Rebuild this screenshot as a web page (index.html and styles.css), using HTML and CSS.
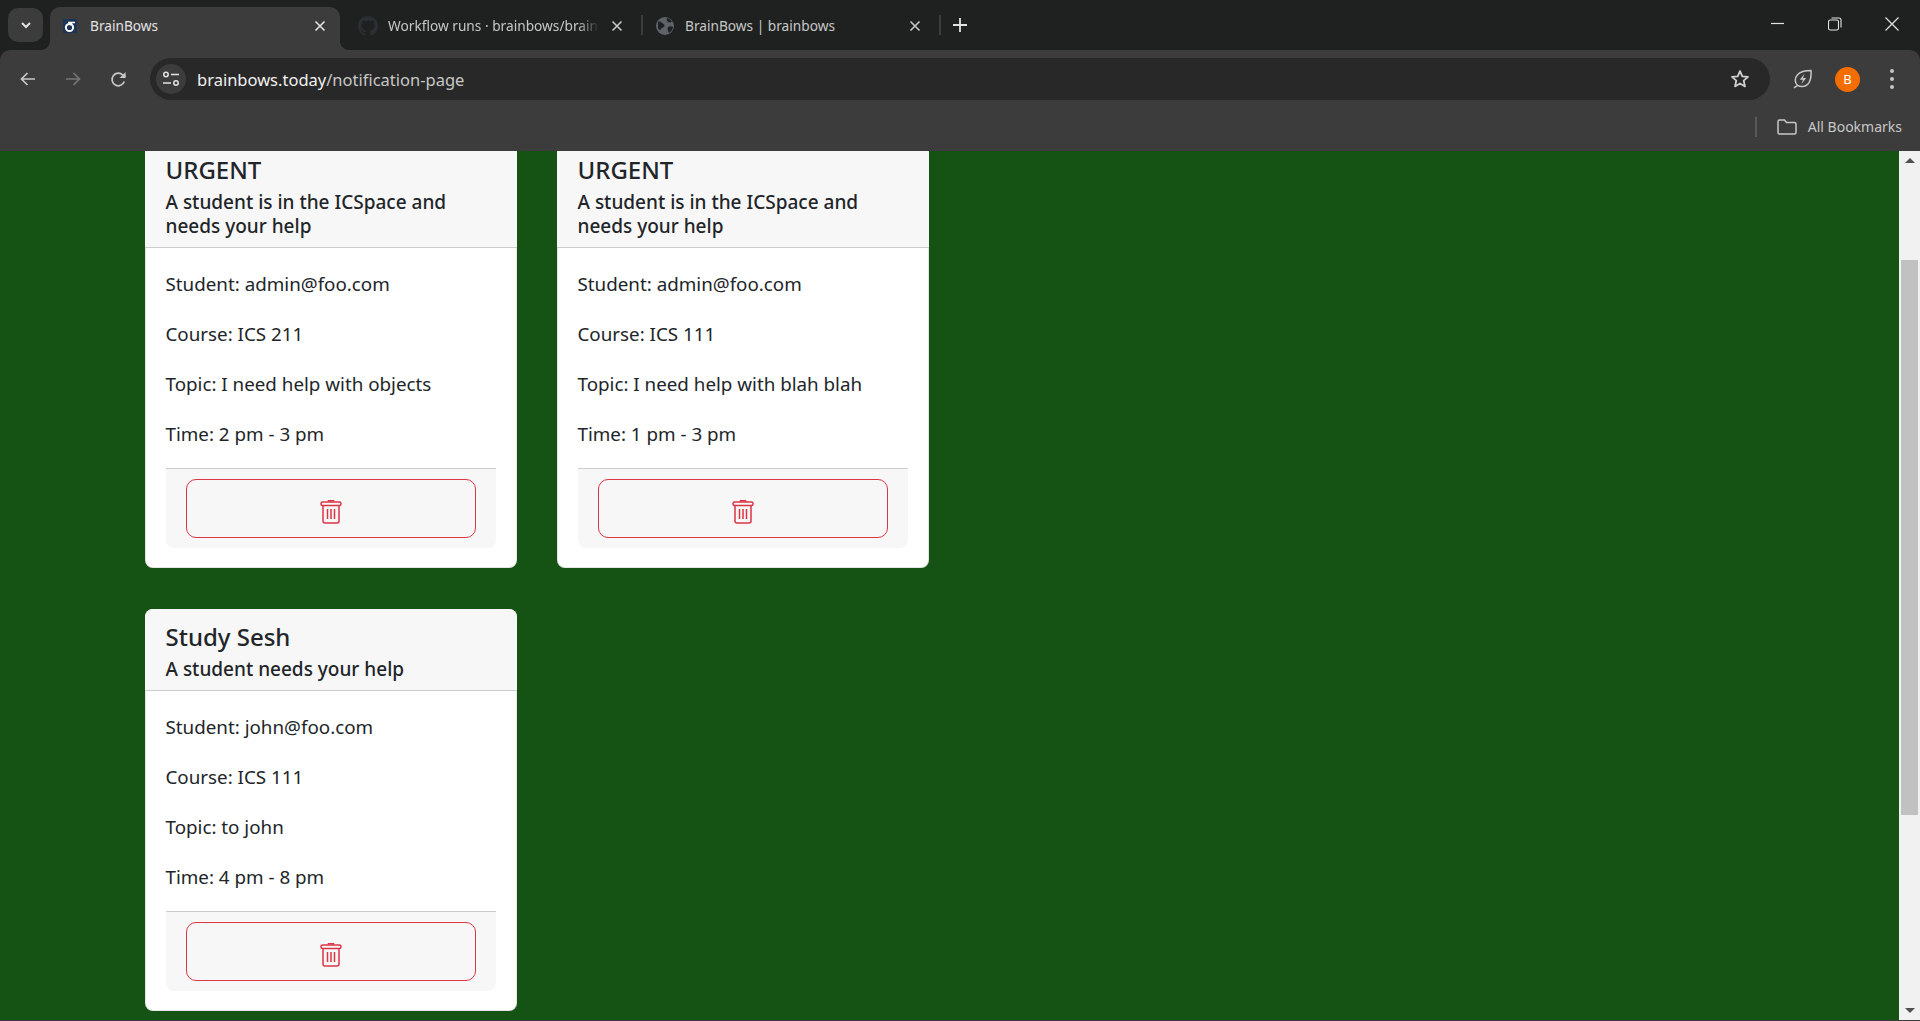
FILE: index.html
```html
<!DOCTYPE html>
<html>
<head>
    <title>BrainBows</title>
    <link rel="stylesheet" href="styles.css">
</head>
<body>
    <div id="browser">
        <div class="tabstrip">
            <div class="tab-search">
                <svg width="14" height="14" viewBox="0 0 14 14"><path d="M3 5l4 4 4-4" fill="none" stroke="#e3e3e3" stroke-width="2"/></svg>
            </div>
            <div class="tab tab-active">
                <svg class="favicon" width="14" height="14" viewBox="0 0 14 14"><rect width="14" height="14" fill="#1d3557"/><circle cx="6.5" cy="8.5" r="3.6" fill="none" stroke="#fff" stroke-width="2"/><path d="M5 3.5h7M9 3.5L7 6" fill="none" stroke="#fff" stroke-width="1.6"/></svg>
                <span class="tab-title">BrainBows</span>
                <svg class="tab-x" width="12" height="12" viewBox="0 0 12 12"><path d="M1.5 1.5l9 9M10.5 1.5l-9 9" stroke="#e3e3e3" stroke-width="1.6"/></svg>
            </div>
            <div class="tab tab-github">
                <svg class="favicon-lg" width="20" height="20" viewBox="0 0 16 16"><path fill="#2b2f33" d="M8 0C3.58 0 0 3.58 0 8c0 3.54 2.29 6.53 5.47 7.59.4.07.55-.17.55-.38v-1.34c-2.23.48-2.7-1.07-2.7-1.07-.36-.92-.89-1.17-.89-1.17-.73-.5.05-.49.05-.49.8.06 1.23.83 1.23.83.72 1.22 1.87.87 2.33.66.07-.52.28-.87.51-1.07-1.78-.2-3.64-.89-3.64-3.95 0-.87.31-1.59.82-2.15-.08-.2-.36-1.02.08-2.12 0 0 .67-.21 2.2.82a7.6 7.6 0 0 1 4 0c1.53-1.04 2.2-.82 2.2-.82.44 1.1.16 1.92.08 2.12.51.56.82 1.27.82 2.15 0 3.07-1.87 3.75-3.65 3.95.29.25.54.73.54 1.48v2.2c0 .21.15.46.55.38A8 8 0 0 0 16 8c0-4.42-3.58-8-8-8z"/></svg>
                <span class="tab-title tab-fade">Workflow runs · brainbows/brainbows</span>
                <svg class="tab-x" width="12" height="12" viewBox="0 0 12 12"><path d="M1.5 1.5l9 9M10.5 1.5l-9 9" stroke="#c7c7c7" stroke-width="1.6"/></svg>
            </div>
            <div class="tab-sep"></div>
            <div class="tab tab-pages">
                <svg class="favicon-globe" width="18" height="18" viewBox="0 0 18 18"><circle cx="9" cy="9" r="9" fill="#5f6368"/><path d="M2 5c2-1 3 0 4 1s3 1 2.500 3-3 1-3.500 3-2 1-3-1zM11 1c2 .5 4 2 5 4-2 0-3 1-4 0s-2-3-1-4zM12 10c2-1 4-1 5 0-.5 3-2 5-4 6-1-2-2-4-1-6z" fill="#202124"/></svg>
                <span class="tab-title">BrainBows | brainbows</span>
                <svg class="tab-x" width="12" height="12" viewBox="0 0 12 12"><path d="M1.5 1.5l9 9M10.5 1.5l-9 9" stroke="#c7c7c7" stroke-width="1.6"/></svg>
            </div>
            <div class="tab-sep"></div>
            <svg class="tab-new" width="14" height="14" viewBox="0 0 14 14"><path d="M7 0v14M0 7h14" stroke="#e3e3e3" stroke-width="1.8"/></svg>
            <div class="window-btns">
                <svg width="14" height="14" viewBox="0 0 14 14"><path d="M0 6.500h13" stroke="#e3e3e3" stroke-width="1.200"/></svg>
                <svg width="14" height="14" viewBox="0 0 14 14"><rect x="0.500" y="3" width="10" height="10" rx="1.800" fill="none" stroke="#e3e3e3" stroke-width="1.100"/><path d="M3.500 1h7.500a2 2 0 0 1 2 2v7.500" fill="none" stroke="#e3e3e3" stroke-width="1.100"/></svg>
                <svg width="14" height="14" viewBox="0 0 14 14"><path d="M.5.500l13 13M13.500.5l-13 13" stroke="#e3e3e3" stroke-width="1.200"/></svg>
            </div>
        </div>

        <div class="toolbar">
            <div class="nav-btns">
                <svg width="16" height="14" viewBox="0 0 16 14"><path d="M15 7H2M7.500 1L1.500 7l6 6" fill="none" stroke="#c7c7c7" stroke-width="1.700"/></svg>
                <svg width="16" height="14" viewBox="0 0 16 14"><path d="M1 7h13M8.500 1l6 6-6 6" fill="none" stroke="#757575" stroke-width="1.700"/></svg>
                <svg width="17" height="17" viewBox="0 0 17 17"><path d="M14.300 10.500A6.300 6.300 0 1 1 12.800 4L15 6.200" fill="none" stroke="#c7c7c7" stroke-width="1.700"/><path d="M15.600 1v6h-6z" fill="#c7c7c7"/></svg>
            </div>
            <div class="omnibox">
                <div class="site-settings">
                    <svg width="18" height="16" viewBox="0 0 18 16"><circle cx="4" cy="3.500" r="2.200" fill="none" stroke="#e3e3e3" stroke-width="1.500"/><path d="M9 3.500h8M1 12h8" stroke="#e3e3e3" stroke-width="1.700"/><circle cx="14" cy="12" r="2.200" fill="none" stroke="#e3e3e3" stroke-width="1.500"/></svg>
                </div>
                <span class="url"><span class="url-host">brainbows.today</span>/notification-page</span>
                <svg class="star" width="20" height="20" viewBox="0 0 20 20"><path d="M10 2l2.300 5.400 5.700.5-4.300 3.800 1.300 5.700L10 14.400l-5 3 1.300-5.700L2 7.900l5.700-.5z" fill="none" stroke="#d0d0d0" stroke-width="1.800" stroke-linejoin="round"/></svg>
            </div>
            <svg class="leaf" width="20" height="20" viewBox="0 0 20 20"><path d="M19 1.500c.4 5.500-.3 10.500-3 13.500s-7.500 3.300-10.500 1.300c-3-2.800-3-7.300 0-10.600S13 1.500 19 1.500zM5.500 16.300L2 18.800" fill="none" stroke="#c7c7c7" stroke-width="1.500"/><path d="M12.500 4.800L7.800 10.800h3.200l-1.700 4.400 4.900-6.200h-3.200z" fill="#c7c7c7"/></svg>
            <div class="avatar">B</div>
            <div class="menu-dots"><i></i><i></i><i></i></div>
        </div>

        <div class="bookmarks">
            <div class="bm-sep"></div>
            <svg width="20" height="16" viewBox="0 0 20 16"><path d="M1 2.500A1.500 1.500 0 0 1 2.500 1h5l2 2.500h8A1.500 1.500 0 0 1 19 5v8.500a1.500 1.500 0 0 1-1.500 1.500h-15A1.500 1.500 0 0 1 1 13.500z" fill="none" stroke="#c7c7c7" stroke-width="1.500"/></svg>
            <span class="bm-label">All Bookmarks</span>
        </div>
    </div>

    <div id="viewport">
        <div id="page">
            <div id="notification-list">
                <div class="card">
                    <div class="card-header">
                        <div class="card-title">URGENT</div>
                        <div class="card-subtitle">A student is in the ICSpace and needs your help</div>
                    </div>
                    <div class="card-body">
                        <p>Student: admin@foo.com</p>
                        <p>Course: ICS 211</p>
                        <p>Topic: I need help with objects</p>
                        <p>Time: 2 pm - 3 pm</p>
                        <div class="card-footer">
                            <button class="btn-delete">
                                <svg width="22" height="25" viewBox="0 0 22 25"><path d="M8 2.500V1.500h6v1" fill="#dc3545" stroke="#dc3545"/><rect x="1" y="3" width="20" height="3.500" rx="1.500" fill="none" stroke="#dc3545" stroke-width="1.500"/><path d="M3 6.500v15.500a2 2 0 0 0 2 2h12a2 2 0 0 0 2-2V6.500M7.500 10v10M11 10v10M14.500 10v10" fill="none" stroke="#dc3545" stroke-width="1.500"/></svg>
                            </button>
                        </div>
                    </div>
                </div>
                <div class="card">
                    <div class="card-header">
                        <div class="card-title">URGENT</div>
                        <div class="card-subtitle">A student is in the ICSpace and needs your help</div>
                    </div>
                    <div class="card-body">
                        <p>Student: admin@foo.com</p>
                        <p>Course: ICS 111</p>
                        <p>Topic: I need help with blah blah</p>
                        <p>Time: 1 pm - 3 pm</p>
                        <div class="card-footer">
                            <button class="btn-delete">
                                <svg width="22" height="25" viewBox="0 0 22 25"><path d="M8 2.500V1.500h6v1" fill="#dc3545" stroke="#dc3545"/><rect x="1" y="3" width="20" height="3.500" rx="1.500" fill="none" stroke="#dc3545" stroke-width="1.500"/><path d="M3 6.500v15.500a2 2 0 0 0 2 2h12a2 2 0 0 0 2-2V6.500M7.500 10v10M11 10v10M14.500 10v10" fill="none" stroke="#dc3545" stroke-width="1.500"/></svg>
                            </button>
                        </div>
                    </div>
                </div>
                <div class="card">
                    <div class="card-header">
                        <div class="card-title">Study Sesh</div>
                        <div class="card-subtitle">A student needs your help</div>
                    </div>
                    <div class="card-body">
                        <p>Student: john@foo.com</p>
                        <p>Course: ICS 111</p>
                        <p>Topic: to john</p>
                        <p>Time: 4 pm - 8 pm</p>
                        <div class="card-footer">
                            <button class="btn-delete">
                                <svg width="22" height="25" viewBox="0 0 22 25"><path d="M8 2.500V1.500h6v1" fill="#dc3545" stroke="#dc3545"/><rect x="1" y="3" width="20" height="3.500" rx="1.500" fill="none" stroke="#dc3545" stroke-width="1.500"/><path d="M3 6.500v15.500a2 2 0 0 0 2 2h12a2 2 0 0 0 2-2V6.500M7.500 10v10M11 10v10M14.500 10v10" fill="none" stroke="#dc3545" stroke-width="1.500"/></svg>
                            </button>
                        </div>
                    </div>
                </div>
            </div>
        </div>
        <div class="scrollbar">
            <div class="scroll-up"></div>
            <div class="scroll-track"><div class="scroll-thumb"></div></div>
            <div class="scroll-down"></div>
        </div>
    </div>
</body>
</html>
```

FILE: styles.css
```css
html, body {
    margin: 0;
    height: 100%;
    overflow: hidden;
}
body {
    font-family: "Noto Sans", Arial, sans-serif;
    display: flex;
    flex-direction: column;
    height: 1021px;
    box-sizing: border-box;
    background-color: #145314;
    border-bottom: 1px solid #3c3c3c;
}
svg {
    display: block;
    flex: none;
}

/* browser chrome */
#browser {
    flex: none;
    background-color: #1f2121;
    color: #e3e3e3;
}
.tabstrip {
    height: 50px;
    display: flex;
    align-items: center;
    position: relative;
}
.tab-search {
    width: 35px;
    height: 34px;
    margin-left: 8px;
    margin-right: 7px;
    background-color: #3c3c3c;
    border-radius: 10px;
    display: flex;
    align-items: center;
    justify-content: center;
}
.tab {
    display: flex;
    align-items: center;
    height: 43px;
    align-self: flex-end;
    box-sizing: border-box;
    padding-bottom: 6px;
    font-size: 13.700px;
    color: #c7c7c7;
}
.tab-active {
    width: 290px;
    padding-left: 13px;
    padding-right: 14px;
    background-color: #3c3c3c;
    border-radius: 10px 10px 0 0;
    color: #e3e3e3;
    position: relative;
}
.tab-active::before,
.tab-active::after {
    content: "";
    position: absolute;
    bottom: 0;
    width: 10px;
    height: 10px;
}
.tab-active::before {
    left: -10px;
    background: radial-gradient(circle at 0 0, transparent 10px, #3c3c3c 10.5px);
}
.tab-active::after {
    right: -10px;
    background: radial-gradient(circle at 100% 0, transparent 10px, #3c3c3c 10.5px);
}
.favicon {
    margin-right: 13px;
}
.tab-title {
    flex: 1;
    white-space: nowrap;
    overflow: hidden;
}
.tab-fade {
    -webkit-mask-image: linear-gradient(to right, #000 90%, transparent);
    mask-image: linear-gradient(to right, #000 90%, transparent);
}
.tab-github {
    width: 301px;
    padding-left: 18px;
    padding-right: 18px;
}
.favicon-lg {
    margin-right: 10px;
}
.tab-x {
    margin-left: 12px;
}
.tab-sep {
    width: 2px;
    height: 20px;
    background-color: #3c3c3c;
    flex: none;
}
.tab-pages {
    width: 296px;
    padding-left: 13px;
    padding-right: 18px;
}
.favicon-globe {
    margin-right: 11px;
}
.tab-new {
    margin-left: 12px;
}
.window-btns {
    margin-left: auto;
    display: flex;
    gap: 43px;
    margin-right: 21px;
    margin-top: -2px;
}
.toolbar {
    height: 58px;
    background-color: #3c3c3c;
    border-radius: 10px 10px 0 0;
    display: flex;
    align-items: center;
}
.nav-btns {
    display: flex;
    align-items: center;
    gap: 29px;
    margin-left: 20px;
    width: 130px;
}
.omnibox {
    width: 1620px;
    height: 42px;
    background-color: #282828;
    border-radius: 21px;
    display: flex;
    align-items: center;
    box-sizing: border-box;
    padding: 0 20px 0 6px;
}
.site-settings {
    width: 30px;
    height: 30px;
    border-radius: 50%;
    background-color: #3c3c3c;
    display: flex;
    align-items: center;
    justify-content: center;
    margin-right: 11px;
}
.url {
    flex: 1;
    font-size: 16.500px;
    color: #c7c7c7;
}
.url-host {
    color: #f0f0f0;
}
.leaf {
    margin-left: 22px;
}
.avatar {
    width: 25px;
    height: 25px;
    border-radius: 50%;
    background-color: #f46d01;
    color: #fff;
    font-size: 13px;
    display: flex;
    align-items: center;
    justify-content: center;
    margin-left: 23px;
}
.menu-dots {
    display: flex;
    flex-direction: column;
    gap: 4px;
    margin-left: 30px;
}
.menu-dots i {
    display: block;
    width: 4px;
    height: 4px;
    border-radius: 50%;
    background-color: #c7c7c7;
}
.bookmarks {
    height: 43px;
    box-sizing: border-box;
    padding-bottom: 6px;
    background-color: #3c3c3c;
    display: flex;
    align-items: center;
    justify-content: flex-end;
    padding-right: 18px;
}
.bm-sep {
    width: 2px;
    height: 20px;
    background-color: #5a5a5a;
    margin-right: 20px;
}
.bm-label {
    font-size: 14px;
    color: #c7c7c7;
    margin-left: 11px;
}

/* page */
#viewport {
    flex: 1;
    min-height: 0;
    display: flex;
}
#page {
    flex: 1;
    overflow: hidden;
}
#notification-list {
    margin-top: -9px;
    padding-left: 145px;
    display: grid;
    grid-template-columns: repeat(2, 372px);
    gap: 41px 40px;
    align-items: start;
}
.card {
    background-color: #fff;
    border-radius: 8px;
    overflow: hidden;
    box-shadow: 0 0 0 1px rgba(0, 0, 0, 0.1) inset;
    color: #212529;
}
.card-header {
    background-color: #f7f7f7;
    border-bottom: 1px solid #ccc;
    padding: 8px 20px 9px 20.500px;
}
.card-title {
    font-size: 24px;
    font-weight: 500;
    line-height: 40px;
}
.card-subtitle {
    font-size: 19px;
    font-weight: 500;
    line-height: 24px;
}
.card-body {
    padding: 20px 21px;
}
.card-body p {
    margin: 0 0 19px -0.500px;
    padding-top: 1px;
    font-size: 18.800px;
    line-height: 30px;
}
.card-footer {
    background-color: #f7f7f7;
    border-top: 1px solid #ccc;
    border-radius: 0 0 8px 8px;
    padding: 10px 20px;
}
.btn-delete {
    width: 100%;
    height: 59px;
    display: flex;
    align-items: center;
    justify-content: center;
    background: transparent;
    border: 1px solid #dc3545;
    border-radius: 10px;
    padding: 6px 0 0;
}

/* scrollbar */
.scrollbar {
    width: 21px;
    flex: none;
    background-color: #f1f1f1;
    display: flex;
    flex-direction: column;
    align-items: center;
}
.scroll-up,
.scroll-down {
    width: 0;
    height: 0;
    flex: none;
    border-left: 5px solid transparent;
    border-right: 5px solid transparent;
}
.scroll-up {
    margin: 7px 0 0;
    border-bottom: 5px solid #505050;
}
.scroll-down {
    margin: 0 0 7px;
    border-top: 5px solid #505050;
}
.scroll-track {
    flex: 1;
    width: 17px;
}
.scroll-thumb {
    margin-top: 97px;
    height: 555px;
    background-color: #c1c1c1;
}
```
